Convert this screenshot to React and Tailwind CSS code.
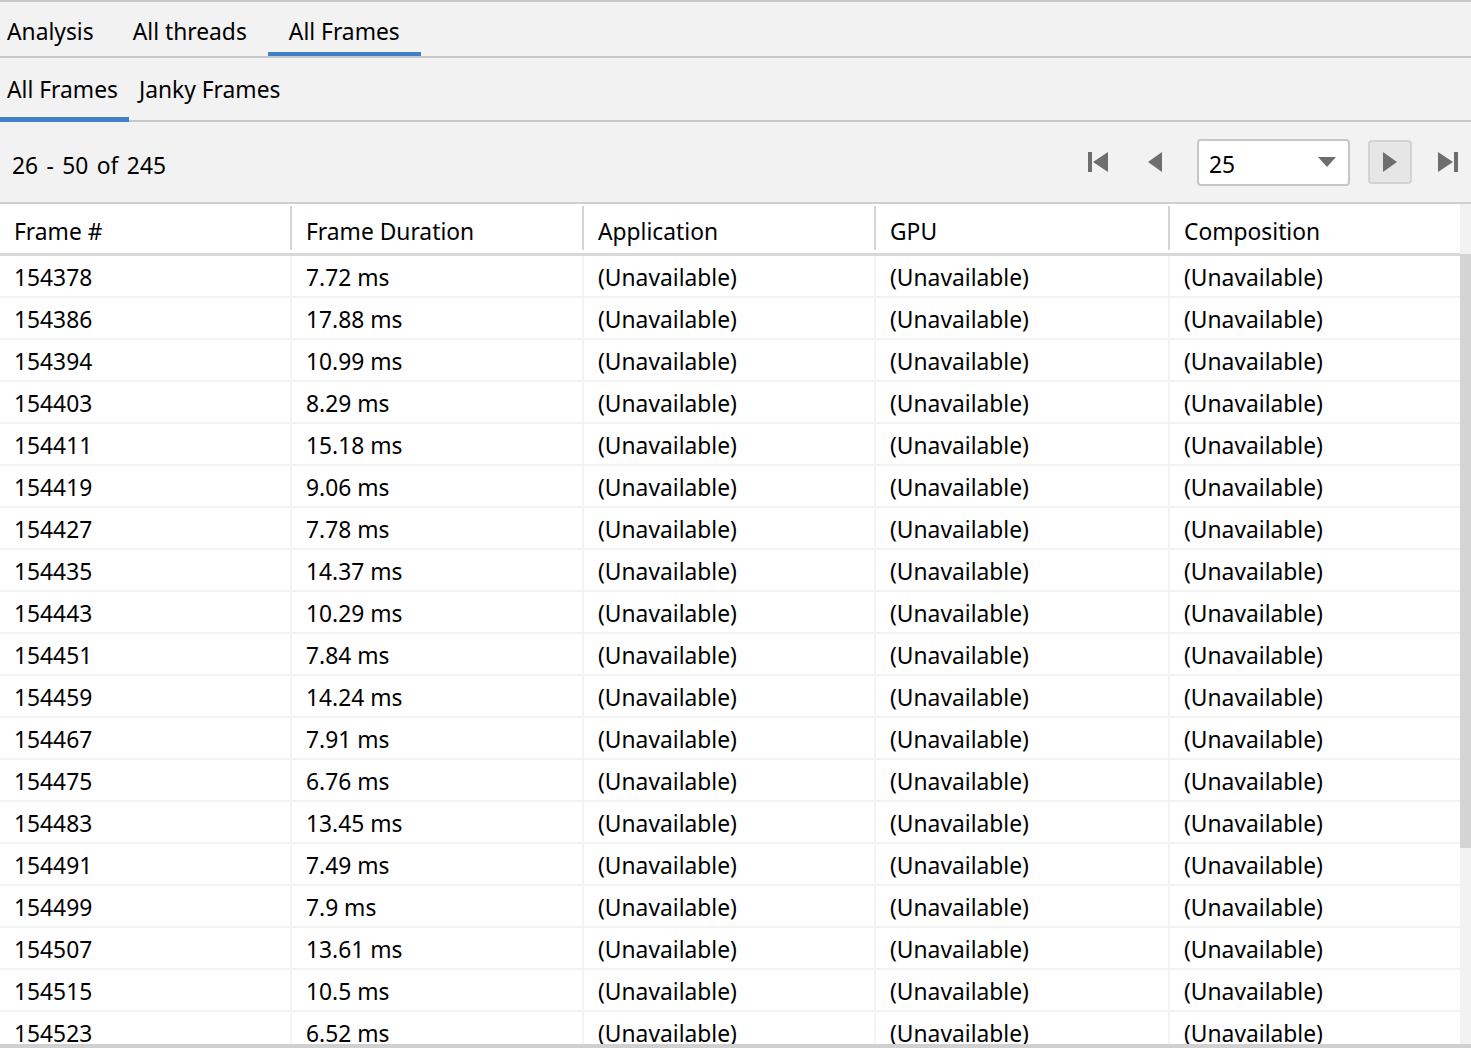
const rows = [
  ['154378', '7.72 ms'],
  ['154386', '17.88 ms'],
  ['154394', '10.99 ms'],
  ['154403', '8.29 ms'],
  ['154411', '15.18 ms'],
  ['154419', '9.06 ms'],
  ['154427', '7.78 ms'],
  ['154435', '14.37 ms'],
  ['154443', '10.29 ms'],
  ['154451', '7.84 ms'],
  ['154459', '14.24 ms'],
  ['154467', '7.91 ms'],
  ['154475', '6.76 ms'],
  ['154483', '13.45 ms'],
  ['154491', '7.49 ms'],
  ['154499', '7.9 ms'],
  ['154507', '13.61 ms'],
  ['154515', '10.5 ms'],
  ['154523', '6.52 ms'],
]

const headers = ['Frame #', 'Frame Duration', 'Application', 'GPU', 'Composition']
const colW = ['w-[292px]', 'w-[292px]', 'w-[292px]', 'w-[294px]', 'w-[290px]']

const FirstIcon = () => (
  <svg width="20" height="20" viewBox="0 0 20 20" fill="#6e6e6e">
    <rect x="0" y="0" width="4" height="20" />
    <polygon points="20,0 20,20 5,10" />
  </svg>
)

const PrevIcon = () => (
  <svg width="14" height="20" viewBox="0 0 14 20" fill="#6e6e6e">
    <polygon points="14,0 14,20 0,10" />
  </svg>
)

const NextIcon = () => (
  <svg width="14" height="20" viewBox="0 0 14 20" fill="#6e6e6e">
    <polygon points="0,0 0,20 14,10" />
  </svg>
)

const LastIcon = () => (
  <svg width="20" height="20" viewBox="0 0 20 20" fill="#6e6e6e">
    <polygon points="0,0 0,20 15,10" />
    <rect x="16" y="0" width="4" height="20" />
  </svg>
)

export default function App() {
  return (
    <div
      className="h-[1048px] w-[1471px] overflow-hidden flex flex-col bg-[#f2f2f2] text-black text-[22.8px] border-t-2 border-[#c8c8c8]"
      style={{ fontFamily: '"Noto Sans", "Open Sans", sans-serif' }}
    >
      {/* top tabs */}
      <div className="h-[56px] flex items-stretch border-b-2 border-[#c8c8c8] shrink-0">
        <div className="pl-[7px] pr-[18px] flex items-center border-b-4 border-transparent pt-[10px]">Analysis</div>
        <div className="px-[21px] flex items-center border-b-4 border-transparent pt-[10px]">All threads</div>
        <div className="px-[21px] flex items-center border-b-4 border-[#3f80c8] pt-[10px]">All Frames</div>
      </div>

      {/* sub tabs */}
      <div className="h-[64px] flex items-stretch border-b-2 border-[#c8c8c8] shrink-0">
        <div className="pl-[7px] pr-[11px] flex items-center border-b-[5px] border-[#3f80c8] -mb-[2px] pt-[6px]">All Frames</div>
        <div className="pl-[10px] flex items-center border-b-[5px] border-transparent -mb-[2px] pt-[6px]">Janky Frames</div>
      </div>

      {/* pager */}
      <div className="h-[82px] flex items-center border-b-2 border-[#cfcfcf] shrink-0 pl-[12px] pr-[13px]">
        <div className="flex-1 pt-[8px] [word-spacing:2.5px]">26 - 50 of 245</div>
        <div className="flex items-center">
          <button className="w-[20px] h-[20px] flex items-center justify-center mr-[40px]"><FirstIcon /></button>
          <button className="w-[14px] h-[20px] flex items-center justify-center mr-[35px]"><PrevIcon /></button>
          <div className="w-[153px] h-[47px] bg-white border-2 border-[#c6c6c6] rounded-[4px] flex items-center justify-between pl-[10px] pr-[12px]">
            <span className="pt-[6px]">25</span>
            <svg width="18" height="10" viewBox="0 0 18 10" fill="#6e6e6e">
              <polygon points="0,0 18,0 9,10" />
            </svg>
          </div>
          <button className="ml-[18px] w-[44px] h-[44px] bg-[#e6e6e6] border-2 border-[#d2d2d2] rounded-[4px] flex items-center justify-center">
            <NextIcon />
          </button>
          <button className="ml-[26px] w-[20px] h-[20px] flex items-center justify-center"><LastIcon /></button>
        </div>
      </div>

      {/* table */}
      <div className="flex-1 flex min-h-0 border-b-4 border-[#d0d0d0]">
        <div className="w-[1460px] bg-white flex flex-col overflow-hidden">
          <div className="h-[52px] shrink-0 flex border-b-[3px] border-[#d9d9d9]">
            {headers.map((h, i) => (
              <div key={h} className={`relative ${colW[i]} flex items-center pl-[14px] pt-[7px]`}>
                {h}
                {i < 4 && <div className="absolute right-0 top-[2px] bottom-[3px] w-[2px] bg-[#d4d4d4]" />}
              </div>
            ))}
          </div>
          {rows.map(([id, dur]) => (
            <div key={id} className="h-[42px] shrink-0 flex border-b-2 border-[#f3f3f3]">
              {[id, dur, '(Unavailable)', '(Unavailable)', '(Unavailable)'].map((c, i) => (
                <div key={i} className={`${colW[i]} flex items-center pl-[14px] pt-[4px] ${i < 4 ? 'border-r-2 border-[#f3f3f3]' : ''}`}>
                  {c}
                </div>
              ))}
            </div>
          ))}
        </div>
        <div className="w-[11px] bg-[#f2f2f2] flex flex-col">
          <div className="h-[50px]" />
          <div className="h-[594px] bg-[#d4d4d4]" />
        </div>
      </div>
    </div>
  )
}
